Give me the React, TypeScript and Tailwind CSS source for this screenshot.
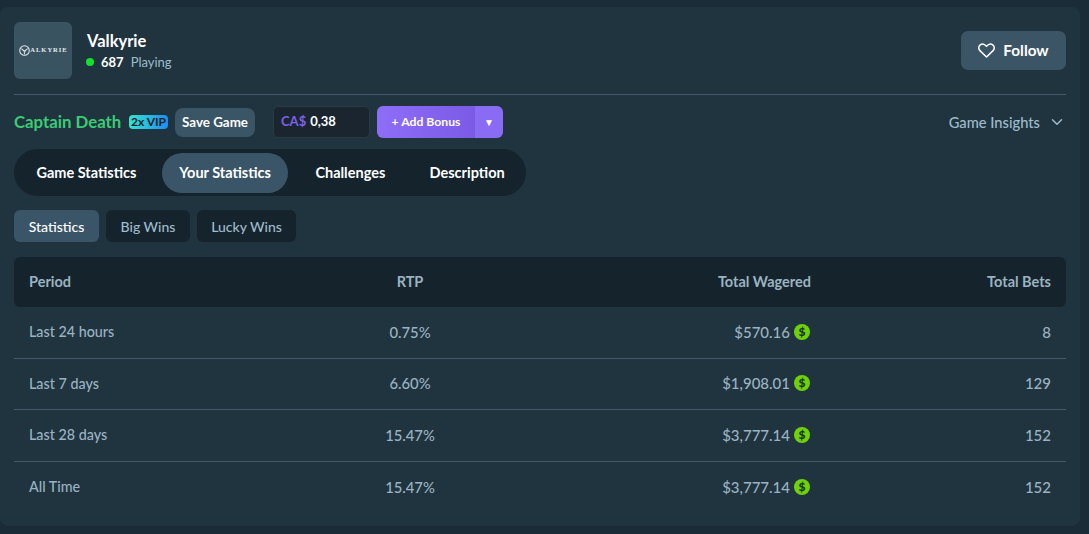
import { ChevronDown } from "lucide-react";

const rows = [
  ["Last 24 hours", "0.75%", "$570.16", "8"],
  ["Last 7 days", "6.60%", "$1,908.01", "129"],
  ["Last 28 days", "15.47%", "$3,777.14", "152"],
  ["All Time", "15.47%", "$3,777.14", "152"],
];

function Coin() {
  return (
    <span className="ml-[4px] mr-[1px] flex h-[16px] w-[16px] items-center justify-center rounded-full bg-[#6fd10a] text-[12px] font-black text-[#17331f]">$</span>
  );
}

export default function App() {
  return (
    <div className="h-[534px] w-[1089px] overflow-hidden bg-[#1a2c37] font-['Lato',sans-serif]">
      <div className="mt-[7px] h-[519px] w-[1080px] rounded-[8px] bg-[#20343f] px-[14px]">
        <div className="flex h-[88px] items-center justify-between border-b border-[#42596a] pb-[1px]">
          <div className="flex items-center gap-[15px]">
            <div className="flex h-[57px] w-[58px] items-center justify-center rounded-[6px] bg-[#3a5361] pl-[1px] text-white">
              <svg width="11" height="11" viewBox="0 0 12 12" className="shrink-0">
                <circle cx="6" cy="6" r="5.2" fill="none" stroke="#e6edf0" strokeWidth="1.1" />
                <path d="M1.5 3.5 L6 8 L10.5 3.5 L8.5 4.2 L6 6 L3.5 4.2 Z M5.2 8 L6 11 L6.8 8 Z" fill="#e6edf0" />
              </svg>
              <span className="font-['Liberation_Serif',serif] text-[6.5px] font-bold leading-none tracking-[1px] text-[#e6edf0]">ALKYRIE</span>
            </div>
            <div>
              <div className="text-[16.5px] font-bold leading-[20px] text-white">Valkyrie</div>
              <div className="mt-[3px] flex items-center text-[13px] leading-[16px]">
                <span className="ml-[-1px] h-[8px] w-[8px] rounded-full bg-[#14e02e]" />
                <span className="ml-[7px] font-bold text-white">687</span>
                <span className="ml-[7px] text-[#9fbccd]">Playing</span>
              </div>
            </div>
          </div>
          <button className="flex h-[39px] w-[105px] items-center justify-center gap-[8px] rounded-[7px] bg-[#3b5566] text-[15.3px] font-bold text-white">
            <svg width="17" height="15" viewBox="0 0 17 15" fill="none" stroke="white" strokeWidth="1.5" strokeLinejoin="round">
              <path d="M8.5 14 L1.9 7.6 C0.2 5.9 0.4 3.2 2.2 1.8 C4 0.5 6.4 0.8 8.5 3.2 C10.6 0.8 13 0.5 14.8 1.8 C16.6 3.2 16.8 5.9 15.1 7.6 Z" />
            </svg>
            Follow
          </button>
        </div>

        <div className="mt-[11px] flex h-[32px] items-center">
          <span className="w-[107px] whitespace-nowrap text-[16.8px] font-bold text-[#3ccb75]">Captain Death</span>
          <span className="ml-[8px] flex h-[14px] w-[39px] items-center justify-center rounded-[4px] bg-[linear-gradient(90deg,#35e4d0,#1f8cf0)] text-[12px] font-bold text-[#0f2430]">2x VIP</span>
          <span className="ml-[7px] flex h-[29px] w-[80px] items-center justify-center rounded-[8px] bg-[#3a5566] text-[13.4px] font-bold text-white">Save Game</span>
          <div className="ml-[18px] flex h-[32px] w-[97px] items-center rounded-[5px] border border-[#2a3a45] bg-[#1a2530] px-[7px] text-[13px] font-bold">
            <span className="text-[#7d62e8]">CA$</span><span className="ml-[4px] text-white">0,38</span>
          </div>
          <div className="ml-[7px] flex h-[32px] w-[126px] overflow-hidden rounded-[6px] text-white">
            <span className="flex flex-1 items-center justify-center bg-[linear-gradient(90deg,#8e6ef8,#7b5be6)] text-[12.2px] font-bold">+ Add Bonus</span>
            <span className="flex w-[28px] items-center justify-center bg-[#8a6cf4] text-[10px]">▼</span>
          </div>
          <div className="ml-auto flex items-center gap-[8px] text-[14.7px] font-medium text-[#9fbccd]">
            <span>Game Insights</span> <ChevronDown size={18} strokeWidth={2} />
          </div>
        </div>

        <div className="mt-[11px] flex h-[47px] w-[512px] items-center rounded-full bg-[#15232c] px-[4px] text-[14.5px] font-bold text-white">
          <span className="w-[137px] text-center">Game Statistics</span>
          <span className="ml-[7px] flex h-[40px] w-[127px] items-center justify-center rounded-full bg-[#3a5567]">Your Statistics</span>
          <span className="w-[124px] text-center">Challenges</span>
          <span className="w-[110px] text-center">Description</span>
        </div>

        <div className="mt-[14px] flex gap-[7px] text-[14px] font-medium text-[#9fbccd]">
          <span className="flex h-[32px] w-[85px] items-center justify-center rounded-[6px] bg-[#3a5567] text-white">Statistics</span>
          <span className="flex h-[32px] w-[84px] items-center justify-center rounded-[6px] bg-[#15232c]">Big Wins</span>
          <span className="flex h-[32px] w-[99px] items-center justify-center rounded-[6px] bg-[#15232c]">Lucky Wins</span>
        </div>

        <div className="mt-[15px] text-[14.3px] font-medium text-[#9bb3c1]">
          <div className="grid h-[50px] grid-cols-[290px_182px_310px_1fr] items-center rounded-[6px] bg-[#15232c] px-[15px] text-[14.5px] font-bold">
            <span>Period</span><span className="text-center">RTP</span><span className="text-right">Total Wagered</span><span className="text-right">Total Bets</span>
          </div>
          {rows.map((r, i) => (
            <div key={i} className={`grid h-[51.6px] grid-cols-[290px_182px_310px_1fr] items-center px-[15px] pb-[1px] ${i < 3 ? "border-b border-[#42596a]" : ""}`}>
              <span>{r[0]}</span>
              <span className="text-center text-[14.8px]">{r[1]}</span>
              <span className="flex items-center justify-end text-[15px]">{r[2]}<Coin /></span>
              <span className="text-right text-[15px]">{r[3]}</span>
            </div>
          ))}
        </div>
      </div>
    </div>
  );
}
